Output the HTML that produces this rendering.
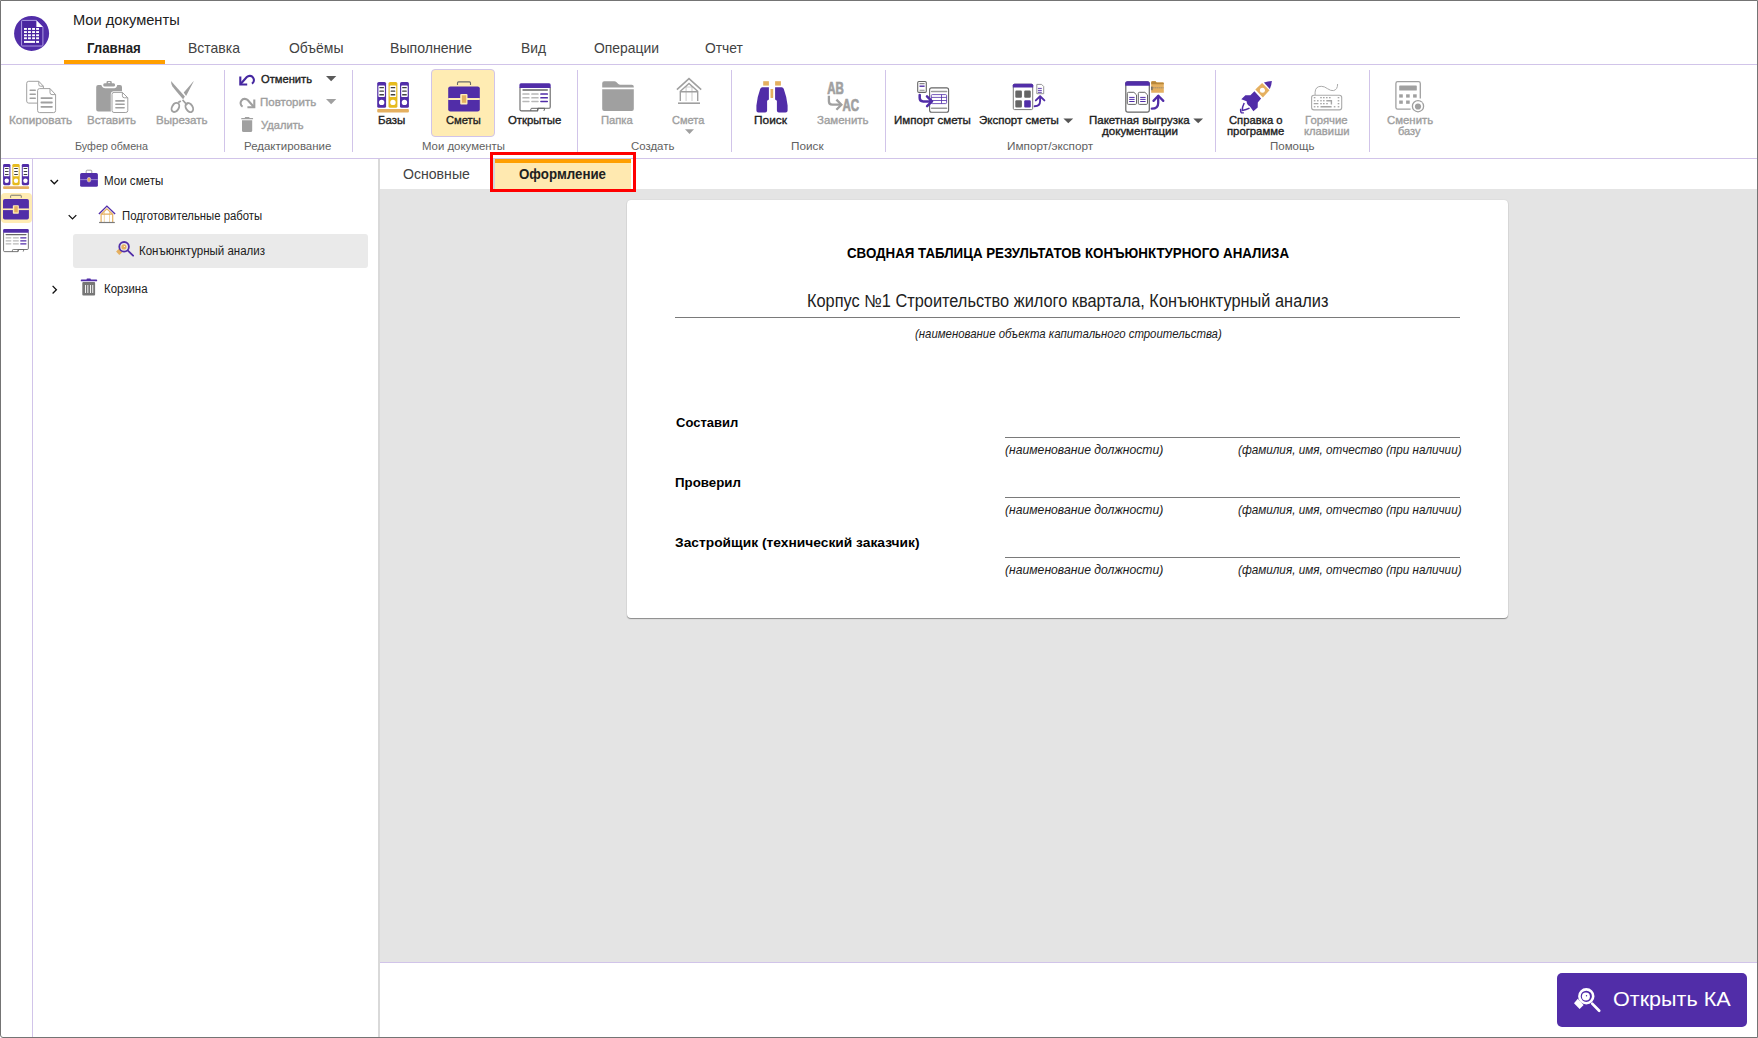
<!DOCTYPE html>
<html><head><meta charset="utf-8"><style>
html,body{margin:0;padding:0;width:1758px;height:1038px;overflow:hidden;background:#fff}
body{position:relative;font-family:"Liberation Sans",sans-serif}
.t{position:absolute;white-space:nowrap;transform-origin:0 0}
svg{overflow:visible}
</style></head><body>
<div style="position:absolute;left:1px;top:64px;width:1756px;height:1px;background:#d1c4e9"></div>
<div style="position:absolute;left:64px;top:60px;width:101px;height:4px;background:#ff9f00"></div>
<div style="position:absolute;left:1px;top:158px;width:1756px;height:1px;background:#d1c4e9"></div>
<div style="position:absolute;left:224px;top:70px;width:1px;height:82px;background:#d1c4e9"></div>
<div style="position:absolute;left:352px;top:70px;width:1px;height:82px;background:#d1c4e9"></div>
<div style="position:absolute;left:577px;top:70px;width:1px;height:82px;background:#d1c4e9"></div>
<div style="position:absolute;left:731px;top:70px;width:1px;height:82px;background:#d1c4e9"></div>
<div style="position:absolute;left:885px;top:70px;width:1px;height:82px;background:#d1c4e9"></div>
<div style="position:absolute;left:1215px;top:70px;width:1px;height:82px;background:#d1c4e9"></div>
<div style="position:absolute;left:1369px;top:70px;width:1px;height:82px;background:#d1c4e9"></div>
<div style="position:absolute;left:431px;top:69px;width:64px;height:68px;background:#ffecb3;border:1px solid #d1c4e9;box-sizing:border-box;border-radius:4px"></div>
<div style="position:absolute;left:32px;top:159px;width:1px;height:878px;background:#d1c4e9"></div>
<div style="position:absolute;left:1px;top:193px;width:31px;height:30px;background:#ffecb3;border-radius:4px"></div>
<div style="position:absolute;left:378px;top:159px;width:2px;height:878px;background:#d9d9d9"></div>
<div style="position:absolute;left:73px;top:234px;width:295px;height:34px;background:#eaeaea;border-radius:3px"></div>
<div style="position:absolute;left:380px;top:189px;width:1377px;height:773px;background:#e4e4e4"></div>
<div style="position:absolute;left:380px;top:962px;width:1377px;height:1px;background:#d1c4e9"></div>
<div style="position:absolute;left:493px;top:159px;width:2px;height:30px;background:#cfd8dc"></div>
<div style="position:absolute;left:495px;top:159px;width:136px;height:4px;background:#ff9f00"></div>
<div style="position:absolute;left:495px;top:163px;width:136px;height:26px;background:#ffe9b0"></div>
<div style="position:absolute;left:627px;top:200px;width:881px;height:418px;background:#fff;border-radius:4px;box-shadow:0 1px 1px rgba(0,0,0,0.38),0 0 1.5px rgba(0,0,0,0.12)"></div>
<div style="position:absolute;left:675px;top:317px;width:785px;height:1px;background:#7a7a7a"></div>
<div style="position:absolute;left:1005px;top:437px;width:455px;height:1px;background:#7a7a7a"></div>
<div style="position:absolute;left:1005px;top:497px;width:455px;height:1px;background:#7a7a7a"></div>
<div style="position:absolute;left:1005px;top:557px;width:455px;height:1px;background:#7a7a7a"></div>
<div style="position:absolute;left:1557px;top:973px;width:190px;height:54px;background:#512da8;border-radius:5px"></div>
<div style="position:absolute;left:490px;top:152px;width:146px;height:40px;border:3px solid #ff0000;box-sizing:border-box"></div>
<div style="position:absolute;left:0px;top:0px;width:1758px;height:1038px;border:1px solid #747474;box-sizing:border-box;border-bottom-left-radius:3px"></div>
<svg style="position:absolute;left:0px;top:0px" width="1758" height="1038" viewBox="0 0 1758 1038"><circle cx="31.6" cy="33.4" r="17.5" fill="#512da8"/><path d="M21.6 21.2 Q21.6 20.4 22.4 20.4 H36.4 L42.9 26.9 V45.2 Q42.9 46 42.1 46 H22.4 Q21.6 46 21.6 45.2 Z" fill="#4a25a0" stroke="#b9a8ea" stroke-width="0.9"/><path d="M36.4 20.6 V26.9 H42.7 Z" fill="#fff"/><rect x="24.0" y="28.0" width="2.9" height="1.9" fill="#fff"/><rect x="28.0" y="28.0" width="2.9" height="1.9" fill="#fff"/><rect x="32.1" y="28.0" width="2.9" height="1.9" fill="#fff"/><rect x="36.1" y="28.0" width="2.9" height="1.9" fill="#fff"/><rect x="24.0" y="31.1" width="2.9" height="1.9" fill="#fff"/><rect x="28.0" y="31.1" width="2.9" height="1.9" fill="#fff"/><rect x="32.1" y="31.1" width="2.9" height="1.9" fill="#fff"/><rect x="36.1" y="31.1" width="2.9" height="1.9" fill="#fff"/><rect x="24.0" y="34.3" width="2.9" height="1.9" fill="#fff"/><rect x="28.0" y="34.3" width="2.9" height="1.9" fill="#fff"/><rect x="32.1" y="34.3" width="2.9" height="1.9" fill="#fff"/><rect x="36.1" y="34.3" width="2.9" height="1.9" fill="#fff"/><rect x="24.0" y="37.3" width="2.9" height="1.9" fill="#fff"/><rect x="28.0" y="37.3" width="2.9" height="1.9" fill="#fff"/><rect x="32.1" y="37.3" width="2.9" height="1.9" fill="#fff"/><rect x="36.1" y="37.3" width="2.9" height="1.9" fill="#fff"/><rect x="24.0" y="40.9" width="11" height="2.0" fill="#fff"/><rect x="36.1" y="40.9" width="2.9" height="2.0" fill="#fff"/><path d="M37.6 103.1 H28.7 Q26.7 103.1 26.7 101.1 V83.3 Q26.7 81.3 28.7 81.3 H38.8 L43.4 86.2 V88.3" fill="none" stroke="#a0a0a0" stroke-width="1"/><path d="M38.8 81.3 V84.4 Q38.8 86.2 40.6 86.2 H43.4" fill="none" stroke="#a0a0a0" stroke-width="1"/><rect x="29.4" y="89.5" width="6.6" height="1.6" rx="0.8" fill="#a0a0a0"/><rect x="29.4" y="93.5" width="6.6" height="1.6" rx="0.8" fill="#a0a0a0"/><rect x="29.4" y="97.4" width="6.6" height="1.6" rx="0.8" fill="#a0a0a0"/><path d="M39.6 88.6 H50 L55.6 94.6 V110.6 Q55.6 112.6 53.6 112.6 H39.6 Q37.6 112.6 37.6 110.6 V90.6 Q37.6 88.6 39.6 88.6 Z" fill="#fff" stroke="#a0a0a0" stroke-width="1"/><path d="M50 88.6 V92.6 Q50 94.6 52 94.6 H55.6" fill="none" stroke="#a0a0a0" stroke-width="1"/><rect x="40.5" y="97.2" width="12.3" height="1.8" rx="0.9" fill="#a0a0a0"/><rect x="40.5" y="101.6" width="12.3" height="1.8" rx="0.9" fill="#a0a0a0"/><rect x="40.5" y="105.9" width="12.3" height="1.8" rx="0.9" fill="#a0a0a0"/><path d="M98.2 85.1 H101.3 Q102.6 88.3 105.2 88.3 H114.3 Q116.4 88.3 117.3 85.1 H120 Q122 85.1 122 87.1 V109.6 Q122 111.6 120 111.6 H98.2 Q96.2 111.6 96.2 109.6 V87.1 Q96.2 85.1 98.2 85.1 Z" fill="#a0a0a0"/><path d="M104.6 83.3 H106.5 V82.3 Q106.5 81.1 107.7 81.1 H110.6 Q111.8 81.1 111.8 82.3 V83.3 H113.7 Q115.1 83.3 115.1 84.9 Q115.1 86.6 113.5 86.6 H104.8 Q103.2 86.6 103.2 84.9 Q103.2 83.3 104.6 83.3 Z" fill="#a0a0a0"/><rect x="108.1" y="82.1" width="2.1" height="1" fill="#fff"/><path d="M114 92.4 H122.4 L127.8 97.8 V110.5 Q127.8 112.5 125.8 112.5 H114 Q112 112.5 112 110.5 V94.4 Q112 92.4 114 92.4 Z" fill="#fff" stroke="#fff" stroke-width="2.4"/><path d="M114 92.4 H122.4 L127.8 97.8 V110.5 Q127.8 112.5 125.8 112.5 H114 Q112 112.5 112 110.5 V94.4 Q112 92.4 114 92.4 Z" fill="#fff" stroke="#a0a0a0" stroke-width="1"/><path d="M122.4 92.4 V95.8 Q122.4 97.8 124.4 97.8 H127.8" fill="none" stroke="#a0a0a0" stroke-width="1"/><rect x="115.1" y="100.1" width="9.8" height="1.6" rx="0.8" fill="#a0a0a0"/><rect x="115.1" y="103.5" width="9.8" height="1.6" rx="0.8" fill="#a0a0a0"/><rect x="115.1" y="107.0" width="9.8" height="1.6" rx="0.8" fill="#a0a0a0"/><path d="M171 81 L184.9 96.6 L183.1 99.3 Q175.5 90.5 172.5 86.5 Q171 84 171 81 Z" fill="#a0a0a0"/><path d="M183.1 99.3 L187.8 104.6 L186.6 105.8 L182 100.6 Z" fill="#a0a0a0"/><path d="M193.9 81 L186.1 95.9 L183.7 92.6 Q189 86.5 191.5 83.5 Q193 81.8 193.9 81 Z" fill="#a0a0a0"/><ellipse cx="175.4" cy="107.4" rx="3.3" ry="4.9" transform="rotate(32 175.4 107.4)" fill="none" stroke="#a0a0a0" stroke-width="1.9"/><ellipse cx="189.3" cy="107.6" rx="3.3" ry="4.9" transform="rotate(-32 189.3 107.6)" fill="none" stroke="#a0a0a0" stroke-width="1.9"/><path d="M178.2 102.6 L180.8 100.9" stroke="#a0a0a0" stroke-width="1.8"/><path d="M240.3 76.6 V84.5 H247.2" fill="none" stroke="#4527a0" stroke-width="2.1"/><path d="M240.6 84 L246.8 77.1 A4.2 4.2 0 1 1 251.9 83.7" fill="none" stroke="#4527a0" stroke-width="2.1"/><path d="M254.3 99.6 V107.3 H247.4" fill="none" stroke="#a0a0a0" stroke-width="2.1"/><path d="M253.9 107 L247.7 100.1 A4.2 4.2 0 1 0 242.6 106.7" fill="none" stroke="#a0a0a0" stroke-width="2.1"/><rect x="241.2" y="117.9" width="11.9" height="1.4" rx="0.5" fill="#a0a0a0"/><rect x="244.8" y="117" width="4.7" height="1.4" rx="0.6" fill="#a0a0a0"/><path d="M242 120.2 H252.2 V130.5 Q252.2 132 250.7 132 H243.5 Q242 132 242 130.5 Z" fill="#a0a0a0"/><path d="M326 76 H336.3 L331.15 81.2 Z" fill="#5a5a5a"/><path d="M326 99 H336.3 L331.15 104.2 Z" fill="#a0a0a0"/><rect x="377.2" y="82" width="8.9" height="25.8" rx="1.6" fill="#512da8"/><rect x="378.4" y="85.6" width="6.5" height="11.4" rx="0.8" fill="#fff"/><rect x="379.3" y="86.9" width="4.7" height="1.3" rx="0.5" fill="#424242"/><rect x="379.3" y="90.4" width="4.7" height="1.3" rx="0.5" fill="#424242"/><rect x="379.3" y="94.10000000000001" width="4.7" height="1.3" rx="0.5" fill="#424242"/><circle cx="381.65" cy="102.4" r="2.7" fill="#fff"/><rect x="388.5" y="82" width="8.9" height="25.8" rx="1.6" fill="#e6bb1e"/><rect x="389.7" y="85.6" width="6.5" height="11.4" rx="0.8" fill="#fff"/><rect x="390.6" y="86.9" width="4.7" height="1.3" rx="0.5" fill="#424242"/><rect x="390.6" y="90.4" width="4.7" height="1.3" rx="0.5" fill="#424242"/><rect x="390.6" y="94.10000000000001" width="4.7" height="1.3" rx="0.5" fill="#424242"/><circle cx="392.95" cy="102.4" r="2.7" fill="#fff"/><rect x="400.0" y="82" width="8.9" height="25.8" rx="1.6" fill="#512da8"/><rect x="401.2" y="85.6" width="6.5" height="11.4" rx="0.8" fill="#fff"/><rect x="402.1" y="86.9" width="4.7" height="1.3" rx="0.5" fill="#424242"/><rect x="402.1" y="90.4" width="4.7" height="1.3" rx="0.5" fill="#424242"/><rect x="402.1" y="94.10000000000001" width="4.7" height="1.3" rx="0.5" fill="#424242"/><circle cx="404.45" cy="102.4" r="2.7" fill="#fff"/><rect x="377.2" y="109.1" width="31.7" height="3.5" rx="1" fill="#e5b060"/><path d="M457.5 85 V82.9 Q457.5 81.9 458.5 81.9 H469.5 Q470.5 81.9 470.5 82.9 V85" fill="none" stroke="#6a6a6a" stroke-width="1.1"/><rect x="448.2" y="86.4" width="31.6" height="25.1" rx="2.2" fill="#512da8"/><rect x="448.2" y="98.0" width="31.6" height="2.0" fill="#ffecb3"/><rect x="460.2" y="94.0" width="7.3" height="10.5" rx="1" fill="#ffecb3"/><rect x="461.9" y="95.3" width="4.3" height="7.5" fill="#e5b060"/><path d="M520 87.5 V109.8 Q520 110.9 521.4 110.9 H537.5 L538.3 108.3 H548.9 Q550.2 108.3 550.2 106.9 V87.5" fill="#fff" stroke="#666666" stroke-width="1.1"/><path d="M530.8 110.9 V109.2 Q530.8 108.3 531.8 108.3 H544.8 L543.9 110.9 M537.6 108.3 V110.9" fill="none" stroke="#666666" stroke-width="1.0"/><path d="M519.4 88 V84.9 Q519.4 83.3 521 83.3 H549.1 Q550.7 83.3 550.7 84.9 V88 Z" fill="#512da8"/><rect x="522.3" y="89.3" width="25.7" height="1.5" rx="0.7" fill="#666666"/><rect x="522.3" y="93.35" width="7.3" height="1.5" rx="0.6" fill="#b8b8b8"/><rect x="531.2" y="93.35" width="7.5" height="1.5" rx="0.6" fill="#b8b8b8"/><rect x="540.2" y="93.35" width="7.8" height="1.5" rx="0.6" fill="#512da8"/><rect x="522.3" y="97.05" width="7.3" height="1.5" rx="0.6" fill="#b8b8b8"/><rect x="531.2" y="97.05" width="7.5" height="1.5" rx="0.6" fill="#b8b8b8"/><rect x="540.2" y="97.05" width="7.8" height="1.5" rx="0.6" fill="#512da8"/><rect x="522.3" y="100.65" width="7.3" height="1.5" rx="0.6" fill="#b8b8b8"/><rect x="531.2" y="100.65" width="7.5" height="1.5" rx="0.6" fill="#b8b8b8"/><rect x="540.2" y="100.65" width="7.8" height="1.5" rx="0.6" fill="#512da8"/><path d="M602.2 87.6 V83.3 Q602.2 81.3 604.2 81.3 H614.3 Q615.6 81.3 616.6 82.3 L618.3 84 Q619.1 84.8 620.3 84.8 H631.8 Q633.8 84.8 633.8 86.8 V87.6 Z" fill="#a0a0a0"/><path d="M602.2 89.2 H633.8 V109 Q633.8 111 631.8 111 H604.2 Q602.2 111 602.2 109 Z" fill="#a0a0a0"/><path d="M676.9 89.7 L689 78.7 L701.2 89.7" fill="none" stroke="#a0a0a0" stroke-width="1.6"/><path d="M684.6 87 H693.4 M686.1 86 V100.9 M692 86 V100.9" fill="none" stroke="#cfcfcf" stroke-width="1.1"/><path d="M680.3 100.9 V91.2 L689 83.4 L697.7 91.2 V100.9 M680.3 91.8 H697.7" fill="none" stroke="#a0a0a0" stroke-width="1.4"/><path d="M678 103.2 H700" fill="none" stroke="#a0a0a0" stroke-width="1.6"/><path d="M685 129.3 H694 L689.5 133.9 Z" fill="#a0a0a0"/><rect x="763.2" y="81.2" width="5.7" height="4.4" fill="#e5b060"/><rect x="775.1" y="81.2" width="5.8" height="4.4" fill="#e5b060"/><rect x="770.5" y="89.1" width="2.7" height="8.9" rx="0.4" fill="#e5b060"/><path d="M762.3 87.2 H768.9 V99.5 L767.1 100.8 V110.5 Q767.1 112.5 765.1 112.5 H758.4 Q756.4 112.5 756.4 110.5 V105.5 Q757.5 96 760.2 89 Q760.8 87.2 762.3 87.2 Z" fill="#512da8"/><path d="M781.7 87.2 H775.1 V99.5 L776.9 100.8 V110.5 Q776.9 112.5 778.9 112.5 H785.6 Q787.6 112.5 787.6 110.5 V105.5 Q786.5 96 783.8 89 Q783.2 87.2 781.7 87.2 Z" fill="#512da8"/><text x="827.3" y="93.7" font-family="Liberation Sans" font-weight="bold" font-size="16" fill="#a0a0a0" stroke="#a0a0a0" stroke-width="0.7" transform="translate(827 0) scale(0.72 1) translate(-827 0)">AB</text><path d="M828.9 95.8 V101.3 Q828.9 104.7 832.3 104.7 H840.5" fill="none" stroke="#a0a0a0" stroke-width="2.3"/><path d="M836.4 99.6 L841.4 104.7 L836.4 109.8" fill="none" stroke="#a0a0a0" stroke-width="2.3"/><text x="842.5" y="110.7" font-family="Liberation Sans" font-weight="bold" font-size="16" fill="#a0a0a0" stroke="#a0a0a0" stroke-width="0.7" transform="translate(842.2 0) scale(0.72 1) translate(-842.2 0)">AC</text><rect x="917.7" y="81.5" width="8.6" height="10.9" rx="1.2" fill="#fff" stroke="#666666" stroke-width="1.1"/><path d="M919.5 83.6 H924.6 M919.5 90.3 H924.6" stroke="#8a8a8a" stroke-width="1.1"/><path d="M919.5 86.2 H924.6" stroke="#512da8" stroke-width="1.4"/><rect x="929.6" y="87.9" width="19" height="24.3" rx="2" fill="#fff" stroke="#666666" stroke-width="1.1"/><path d="M931.6 91.6 H946.6 M931.6 108.3 H946.6" stroke="#9a9a9a" stroke-width="1.5" stroke-linecap="round"/><rect x="931.3" y="94.6" width="15.3" height="9" rx="1" fill="none" stroke="#512da8" stroke-width="0.8"/><path d="M931.3 97.4 H946.6 M931.3 100.5 H946.6 M941.5 94.6 V103.6" stroke="#512da8" stroke-width="0.8"/><path d="M919.7 95 V98 Q919.7 101.4 923.2 101.4 H931" fill="none" stroke="#512da8" stroke-width="2.5" stroke-linecap="round"/><path d="M927 96.4 L932 101.4 L927.1 106.2" fill="none" stroke="#512da8" stroke-width="2.5" stroke-linecap="round" stroke-linejoin="round"/><rect x="1013.3" y="84.2" width="19.4" height="25.4" rx="1.3" fill="#fff" stroke="#7a7a7a" stroke-width="1"/><path d="M1012.8 87.6 V85.3 Q1012.8 83.7 1014.4 83.7 H1031.6 Q1033.2 83.7 1033.2 85.3 V87.6 Z" fill="#512da8"/><rect x="1015.3" y="90.6" width="6.6" height="7.2" rx="1.1" fill="#666666"/><rect x="1024.2" y="90.6" width="6.6" height="7.2" rx="1.1" fill="#666666"/><rect x="1015.3" y="100.3" width="6.6" height="7.2" rx="1.1" fill="#666666"/><rect x="1024.2" y="100.3" width="6.6" height="7.2" rx="1.1" fill="#512da8"/><path d="M1036.8 84.4 H1041.6 L1043.7 86.5 V93.7 H1036.8 Z" fill="#fff" stroke="#8a8a8a" stroke-width="0.9"/><path d="M1037.9 88.4 H1041.8 M1037.9 90.4 H1041.8 M1037.9 92.3 H1041.8" stroke="#512da8" stroke-width="0.9"/><path d="M1034.6 106.3 Q1040.1 106.3 1040.1 101 V96.8" fill="none" stroke="#512da8" stroke-width="1.9" stroke-linecap="round"/><path d="M1035.8 100.4 L1040.1 96.3 L1044.4 100.4" fill="none" stroke="#512da8" stroke-width="1.9" stroke-linecap="round" stroke-linejoin="round"/><path d="M1063.4 118.6 H1073.2 L1068.3 123.3 Z" fill="#555"/><rect x="1125.8" y="81.8" width="23.5" height="30.4" rx="2.2" fill="#fff" stroke="#666666" stroke-width="1.2"/><path d="M1125.2 85.7 V83.3 Q1125.2 81.2 1127.3 81.2 H1147.6 Q1149.8 81.2 1149.8 83.3 V85.7 Z" fill="#512da8"/><path d="M1128.5 92.3 H1133.8999999999999 L1136.5 94.9 V103.3 Q1136.5 104.4 1135.3 104.4 H1128.5 Q1127.3 104.4 1127.3 103.3 V93.5 Q1127.3 92.3 1128.5 92.3 Z" fill="#fff" stroke="#666666" stroke-width="1"/><path d="M1129.2 97.4 H1134.6 M1129.2 99.4 H1134.6 M1129.2 101.5 H1134.6" stroke="#512da8" stroke-width="1"/><path d="M1139.5 92.3 H1144.8999999999999 L1147.5 94.9 V103.3 Q1147.5 104.4 1146.3 104.4 H1139.5 Q1138.3 104.4 1138.3 103.3 V93.5 Q1138.3 92.3 1139.5 92.3 Z" fill="#fff" stroke="#666666" stroke-width="1"/><path d="M1140.2 97.4 H1145.6 M1140.2 99.4 H1145.6 M1140.2 101.5 H1145.6" stroke="#512da8" stroke-width="1"/><path d="M1151.2 92.8 V82.2 Q1151.2 81.2 1152.2 81.2 H1155.5 L1156.6 82.4 H1163 Q1163.8 82.4 1163.8 83.2 V92.8 Z" fill="#e5b060"/><path d="M1151.2 83.9 V82.2 Q1151.2 81.2 1152.2 81.2 H1155.5 L1156.6 82.4 H1163 Q1163.8 82.4 1163.8 83.2 V84.3 H1151.2 Z" fill="#b8873a"/><path d="M1151.4 87.8 H1163.8" stroke="#7a7a7a" stroke-width="1" stroke-dasharray="1 1"/><rect x="1151.2" y="86.6" width="1.4" height="3.6" fill="#666"/><path d="M1151.8 108.7 Q1158.2 108.7 1158.2 103 V96.2" fill="none" stroke="#512da8" stroke-width="2.3" stroke-linecap="round"/><path d="M1153.5 100.9 L1158.3 95.7 L1163.3 100.9" fill="none" stroke="#512da8" stroke-width="2.3" stroke-linecap="round" stroke-linejoin="round"/><path d="M1193.3 118.6 H1203.1 L1198.2 123.3 Z" fill="#555"/><path d="M1263.9 82.6 Q1268 81.1 1271.8 81 Q1271.7 85 1269.8 89 Z" fill="#512da8"/><path d="M1255.3 89.6 L1262.1 83.1 L1269.5 90.3 L1262.9 97.5 Z" fill="#e5b060"/><circle cx="1262.4" cy="90.3" r="2.5" fill="#fff"/><path d="M1254.4 91.3 L1261.1 98.6 L1257.8 102.4 L1257.7 107.6 L1253.4 111.2 L1249.8 106.2 Q1247 105.5 1246.6 101.3 L1241.3 99.2 L1245.4 95.3 L1250.4 95.3 Z" fill="#512da8"/><path d="M1244.2 103 Q1242.3 106.8 1242.2 110.4 Q1246.4 109.9 1249.5 108.2" fill="none" stroke="#512da8" stroke-width="1.5"/><path d="M1240.6 108.7 Q1240.3 112.3 1241.6 112.8 Q1242.9 113.1 1243.8 112.6" fill="none" stroke="#512da8" stroke-width="1.3"/><rect x="1311.6" y="95.2" width="30.1" height="14.7" rx="2.3" fill="#fff" stroke="#aaaaaa" stroke-width="1.1"/><path d="M1315.1 95 V92.2 Q1315.4 86.3 1321.3 86.3 Q1324.3 86.3 1327.4 88.6 Q1330.8 91 1333.4 90.6 Q1337.6 89.8 1337.6 84" fill="none" stroke="#aaaaaa" stroke-width="1"/><rect x="1313.8" y="97.0" width="1.6" height="1.3" fill="#a6a6a6"/><rect x="1320.2" y="97.0" width="1.6" height="1.3" fill="#a6a6a6"/><rect x="1323.0" y="97.0" width="1.6" height="1.3" fill="#a6a6a6"/><rect x="1326.0" y="97.0" width="1.6" height="1.3" fill="#a6a6a6"/><rect x="1329.0" y="97.0" width="1.6" height="1.3" fill="#a6a6a6"/><rect x="1337.7" y="97.0" width="1.6" height="1.3" fill="#a6a6a6"/><rect x="1313.8" y="100.1" width="1.6" height="1.3" fill="#a6a6a6"/><rect x="1317.0" y="100.1" width="1.6" height="1.3" fill="#a6a6a6"/><rect x="1320.2" y="100.1" width="1.6" height="1.3" fill="#a6a6a6"/><rect x="1323.0" y="100.1" width="1.6" height="1.3" fill="#a6a6a6"/><rect x="1337.7" y="100.1" width="1.6" height="1.3" fill="#a6a6a6"/><rect x="1320.2" y="103.0" width="1.6" height="1.3" fill="#a6a6a6"/><rect x="1323.0" y="103.0" width="1.6" height="1.3" fill="#a6a6a6"/><rect x="1337.7" y="103.0" width="1.6" height="1.3" fill="#a6a6a6"/><rect x="1313.8" y="106.1" width="1.6" height="1.3" fill="#a6a6a6"/><rect x="1317.0" y="106.1" width="1.6" height="1.3" fill="#a6a6a6"/><rect x="1333.8" y="106.1" width="1.6" height="1.3" fill="#a6a6a6"/><rect x="1337.7" y="106.1" width="1.6" height="1.3" fill="#a6a6a6"/><rect x="1313.6" y="103.0" width="4.9" height="1.3" rx="0.6" fill="#a6a6a6"/><rect x="1320.4" y="106.1" width="11.3" height="1.4" rx="0.6" fill="#a6a6a6"/><path d="M1326.3 100.7 H1331.4 V104.4" fill="none" stroke="#a6a6a6" stroke-width="1.4"/><rect x="1326.2" y="103" width="1.6" height="1.3" fill="#a6a6a6"/><path d="M1420.3 98.6 V83.4 Q1420.3 81.6 1418.5 81.6 H1397.7 Q1395.9 81.6 1395.9 83.4 V107.4 Q1395.9 109.2 1397.7 109.2 H1410.6" fill="none" stroke="#a0a0a0" stroke-width="1.3"/><rect x="1399.2" y="85.4" width="17.6" height="5.2" rx="0.7" fill="#a0a0a0"/><rect x="1399.2" y="94.3" width="3.6" height="3.3" fill="#a0a0a0"/><rect x="1406.1" y="94.3" width="3.6" height="3.3" fill="#a0a0a0"/><rect x="1413.1" y="94.3" width="3.6" height="3.3" fill="#a0a0a0"/><rect x="1399.2" y="100.5" width="3.6" height="3.3" fill="#a0a0a0"/><rect x="1406.1" y="100.5" width="3.6" height="3.3" fill="#a0a0a0"/><circle cx="1418" cy="106.2" r="5.6" fill="#fff" stroke="#a0a0a0" stroke-width="1.3"/><circle cx="1418" cy="106.5" r="3.1" fill="#a0a0a0"/><path d="M1419.2 102.6 L1422.6 102.4 L1421.4 105.2 Z" fill="#fff"/><g transform="translate(3.1 164) scale(0.82) translate(-377.2 -82)"><rect x="377.2" y="82" width="8.9" height="25.8" rx="1.6" fill="#512da8"/><rect x="378.4" y="85.6" width="6.5" height="11.4" rx="0.8" fill="#fff"/><rect x="379.3" y="86.9" width="4.7" height="1.3" rx="0.5" fill="#424242"/><rect x="379.3" y="90.4" width="4.7" height="1.3" rx="0.5" fill="#424242"/><rect x="379.3" y="94.10000000000001" width="4.7" height="1.3" rx="0.5" fill="#424242"/><circle cx="381.65" cy="102.4" r="2.7" fill="#fff"/><rect x="388.5" y="82" width="8.9" height="25.8" rx="1.6" fill="#e6bb1e"/><rect x="389.7" y="85.6" width="6.5" height="11.4" rx="0.8" fill="#fff"/><rect x="390.6" y="86.9" width="4.7" height="1.3" rx="0.5" fill="#424242"/><rect x="390.6" y="90.4" width="4.7" height="1.3" rx="0.5" fill="#424242"/><rect x="390.6" y="94.10000000000001" width="4.7" height="1.3" rx="0.5" fill="#424242"/><circle cx="392.95" cy="102.4" r="2.7" fill="#fff"/><rect x="400.0" y="82" width="8.9" height="25.8" rx="1.6" fill="#512da8"/><rect x="401.2" y="85.6" width="6.5" height="11.4" rx="0.8" fill="#fff"/><rect x="402.1" y="86.9" width="4.7" height="1.3" rx="0.5" fill="#424242"/><rect x="402.1" y="90.4" width="4.7" height="1.3" rx="0.5" fill="#424242"/><rect x="402.1" y="94.10000000000001" width="4.7" height="1.3" rx="0.5" fill="#424242"/><circle cx="404.45" cy="102.4" r="2.7" fill="#fff"/><rect x="377.2" y="109.1" width="31.7" height="3.5" rx="1" fill="#e5b060"/></g><g transform="translate(3 195) scale(0.82) translate(-448.2 -81.6)"><path d="M457.5 85 V82.9 Q457.5 81.9 458.5 81.9 H469.5 Q470.5 81.9 470.5 82.9 V85" fill="none" stroke="#6a6a6a" stroke-width="1.1"/><rect x="448.2" y="86.4" width="31.6" height="25.1" rx="2.2" fill="#512da8"/><rect x="448.2" y="98.0" width="31.6" height="2.0" fill="#ffecb3"/><rect x="460.2" y="94.0" width="7.3" height="10.5" rx="1" fill="#ffecb3"/><rect x="461.9" y="95.3" width="4.3" height="7.5" fill="#e5b060"/></g><g transform="translate(3.1 229) scale(0.82) translate(-519.4 -83.3)"><path d="M520 87.5 V109.8 Q520 110.9 521.4 110.9 H537.5 L538.3 108.3 H548.9 Q550.2 108.3 550.2 106.9 V87.5" fill="#fff" stroke="#666666" stroke-width="1.1"/><path d="M530.8 110.9 V109.2 Q530.8 108.3 531.8 108.3 H544.8 L543.9 110.9 M537.6 108.3 V110.9" fill="none" stroke="#666666" stroke-width="1.0"/><path d="M519.4 88 V84.9 Q519.4 83.3 521 83.3 H549.1 Q550.7 83.3 550.7 84.9 V88 Z" fill="#512da8"/><rect x="522.3" y="89.3" width="25.7" height="1.5" rx="0.7" fill="#666666"/><rect x="522.3" y="93.35" width="7.3" height="1.5" rx="0.6" fill="#b8b8b8"/><rect x="531.2" y="93.35" width="7.5" height="1.5" rx="0.6" fill="#b8b8b8"/><rect x="540.2" y="93.35" width="7.8" height="1.5" rx="0.6" fill="#512da8"/><rect x="522.3" y="97.05" width="7.3" height="1.5" rx="0.6" fill="#b8b8b8"/><rect x="531.2" y="97.05" width="7.5" height="1.5" rx="0.6" fill="#b8b8b8"/><rect x="540.2" y="97.05" width="7.8" height="1.5" rx="0.6" fill="#512da8"/><rect x="522.3" y="100.65" width="7.3" height="1.5" rx="0.6" fill="#b8b8b8"/><rect x="531.2" y="100.65" width="7.5" height="1.5" rx="0.6" fill="#b8b8b8"/><rect x="540.2" y="100.65" width="7.8" height="1.5" rx="0.6" fill="#512da8"/></g><path d="M50.6 180 L54.3 183.8 L58 180" fill="none" stroke="#111" stroke-width="1.3"/><path d="M68.7 215.1 L72.5 218.9 L76.3 215.1" fill="none" stroke="#111" stroke-width="1.3"/><path d="M52.6 285.9 L56.4 289.7 L52.6 293.5" fill="none" stroke="#111" stroke-width="1.3"/><path d="M86.2 173 V171.1 Q86.2 170.2 87.1 170.2 H90.9 Q91.8 170.2 91.8 171.1 V173" fill="none" stroke="#9a9a9a" stroke-width="0.9"/><rect x="80.1" y="173" width="17.8" height="13.8" rx="1.6" fill="#512da8"/><rect x="80.1" y="179.3" width="17.8" height="0.8" fill="#a996dc"/><ellipse cx="89" cy="179.7" rx="1.8" ry="2.4" fill="#e5b060" stroke="#cfc3ee" stroke-width="0.6"/><path d="M104.3 211.5 V222 M109.5 211.5 V222" stroke="#f2d7a8" stroke-width="1"/><path d="M101.1 222 V214.2 L106.9 208.8 L112.7 214.2 V222 M101.1 214.2 H112.7" fill="none" stroke="#e5b060" stroke-width="1.2"/><path d="M98.9 213.9 L106.9 206.1 L115.1 213.9" fill="none" stroke="#512da8" stroke-width="1.4"/><path d="M99.1 222.5 H114.8" stroke="#7a7a7a" stroke-width="1.2"/><path d="M116.1 251.6 L119.2 248.6 L122.2 252.2 L119.3 255.1 Z" fill="#e5b060"/><circle cx="123.9" cy="246.9" r="2.6" fill="#e5b060"/><circle cx="124.4" cy="246.5" r="0.6" fill="#fff"/><circle cx="124.1" cy="246.8" r="4.8" fill="none" stroke="#512da8" stroke-width="1.8"/><path d="M127.9 250.6 L133.1 255.7" stroke="#512da8" stroke-width="1.8" stroke-linecap="round"/><path d="M81.6 280.4 H96.3" stroke="#512da8" stroke-width="1.8" stroke-linecap="round"/><rect x="86.6" y="278.5" width="4.2" height="1.9" rx="0.6" fill="#512da8"/><rect x="82.3" y="282.1" width="12.8" height="13.5" rx="1" fill="#767676"/><rect x="85.0" y="285" width="0.9" height="8" fill="#fff"/><rect x="87.4" y="285" width="0.9" height="8" fill="#fff"/><rect x="90.0" y="285" width="0.9" height="8" fill="#fff"/><rect x="92.3" y="285" width="0.9" height="8" fill="#fff"/><circle cx="1586.3" cy="996.3" r="6.9" fill="none" stroke="#fff" stroke-width="2.6"/><circle cx="1585.9" cy="996.6" r="4.0" fill="#fff"/><circle cx="1586.5" cy="995.7" r="0.7" fill="#512da8"/><path d="M1592.2 1003.6 L1599.2 1010.8" stroke="#fff" stroke-width="2.7" stroke-linecap="round"/><path d="M1574 1003.3 L1579.6 1009.1 L1583.6 1005 L1577.8 998.8 Z" fill="#fff"/></svg>
<div class="t" style="left:73.49px;top:13.48px;font-size:14.5px;line-height:14.5px;font-weight:normal;font-style:normal;color:#212121;transform:scaleX(1.0096)">Мои документы</div>
<div class="t" style="left:87.29px;top:41.17px;font-size:14.5px;line-height:14.5px;font-weight:bold;font-style:normal;color:#212121;transform:scaleX(0.9123)">Главная</div>
<div class="t" style="left:188.44px;top:41.17px;font-size:14.5px;line-height:14.5px;font-weight:normal;font-style:normal;color:#424242;transform:scaleX(0.9642)">Вставка</div>
<div class="t" style="left:288.54px;top:41.17px;font-size:14.5px;line-height:14.5px;font-weight:normal;font-style:normal;color:#424242;transform:scaleX(0.9618)">Объёмы</div>
<div class="t" style="left:390.23px;top:41.17px;font-size:14.5px;line-height:14.5px;font-weight:normal;font-style:normal;color:#424242;transform:scaleX(0.9723)">Выполнение</div>
<div class="t" style="left:520.65px;top:41.17px;font-size:14.5px;line-height:14.5px;font-weight:normal;font-style:normal;color:#424242;transform:scaleX(0.9520)">Вид</div>
<div class="t" style="left:594.04px;top:41.17px;font-size:14.5px;line-height:14.5px;font-weight:normal;font-style:normal;color:#424242;transform:scaleX(0.9576)">Операции</div>
<div class="t" style="left:705.45px;top:41.17px;font-size:14.5px;line-height:14.5px;font-weight:normal;font-style:normal;color:#424242;transform:scaleX(0.9538)">Отчет</div>
<div class="t" style="left:8.76px;top:114.94px;font-size:11.25px;line-height:11.25px;font-weight:normal;font-style:normal;color:#9e9e9e;-webkit-text-stroke:0.35px #9e9e9e;transform:scaleX(1.0424)">Копировать</div>
<div class="t" style="left:86.87px;top:114.94px;font-size:11.25px;line-height:11.25px;font-weight:normal;font-style:normal;color:#9e9e9e;-webkit-text-stroke:0.35px #9e9e9e;transform:scaleX(1.0283)">Вставить</div>
<div class="t" style="left:156.37px;top:114.94px;font-size:11.25px;line-height:11.25px;font-weight:normal;font-style:normal;color:#9e9e9e;-webkit-text-stroke:0.35px #9e9e9e;transform:scaleX(1.0286)">Вырезать</div>
<div class="t" style="left:261.40px;top:73.94px;font-size:11.25px;line-height:11.25px;font-weight:normal;font-style:normal;color:#212121;-webkit-text-stroke:0.35px #212121;transform:scaleX(0.9922)">Отменить</div>
<div class="t" style="left:260.38px;top:97.34px;font-size:11.25px;line-height:11.25px;font-weight:normal;font-style:normal;color:#9e9e9e;-webkit-text-stroke:0.35px #9e9e9e;transform:scaleX(1.0241)">Повторить</div>
<div class="t" style="left:261.40px;top:119.74px;font-size:11.25px;line-height:11.25px;font-weight:normal;font-style:normal;color:#9e9e9e;-webkit-text-stroke:0.35px #9e9e9e;transform:scaleX(0.9907)">Удалить</div>
<div class="t" style="left:378.38px;top:114.94px;font-size:11.25px;line-height:11.25px;font-weight:normal;font-style:normal;color:#212121;-webkit-text-stroke:0.35px #212121;transform:scaleX(1.0231)">Базы</div>
<div class="t" style="left:446.20px;top:114.94px;font-size:11.25px;line-height:11.25px;font-weight:normal;font-style:normal;color:#212121;-webkit-text-stroke:0.35px #212121;transform:scaleX(0.9943)">Сметы</div>
<div class="t" style="left:507.70px;top:114.94px;font-size:11.25px;line-height:11.25px;font-weight:normal;font-style:normal;color:#212121;-webkit-text-stroke:0.35px #212121;transform:scaleX(1.0113)">Открытые</div>
<div class="t" style="left:601.00px;top:114.94px;font-size:11.25px;line-height:11.25px;font-weight:normal;font-style:normal;color:#9e9e9e;-webkit-text-stroke:0.35px #9e9e9e;transform:scaleX(0.9968)">Папка</div>
<div class="t" style="left:672.30px;top:114.94px;font-size:11.25px;line-height:11.25px;font-weight:normal;font-style:normal;color:#9e9e9e;-webkit-text-stroke:0.35px #9e9e9e;transform:scaleX(0.9788)">Смета</div>
<div class="t" style="left:754.44px;top:114.94px;font-size:11.25px;line-height:11.25px;font-weight:normal;font-style:normal;color:#212121;-webkit-text-stroke:0.35px #212121;transform:scaleX(1.0567)">Поиск</div>
<div class="t" style="left:816.90px;top:114.94px;font-size:11.25px;line-height:11.25px;font-weight:normal;font-style:normal;color:#9e9e9e;-webkit-text-stroke:0.35px #9e9e9e;transform:scaleX(1.0200)">Заменить</div>
<div class="t" style="left:893.97px;top:114.94px;font-size:11.25px;line-height:11.25px;font-weight:normal;font-style:normal;color:#212121;-webkit-text-stroke:0.35px #212121;transform:scaleX(1.0257)">Импорт сметы</div>
<div class="t" style="left:979.18px;top:114.94px;font-size:11.25px;line-height:11.25px;font-weight:normal;font-style:normal;color:#212121;-webkit-text-stroke:0.35px #212121;transform:scaleX(1.0234)">Экспорт сметы</div>
<div class="t" style="left:1088.88px;top:114.94px;font-size:11.25px;line-height:11.25px;font-weight:normal;font-style:normal;color:#212121;-webkit-text-stroke:0.35px #212121;transform:scaleX(1.0214)">Пакетная выгрузка</div>
<div class="t" style="left:1102.40px;top:126.44px;font-size:11.25px;line-height:11.25px;font-weight:normal;font-style:normal;color:#212121;-webkit-text-stroke:0.35px #212121;transform:scaleX(1.0288)">документации</div>
<div class="t" style="left:1229.00px;top:114.94px;font-size:11.25px;line-height:11.25px;font-weight:normal;font-style:normal;color:#212121;-webkit-text-stroke:0.35px #212121;transform:scaleX(1.0000)">Справка о</div>
<div class="t" style="left:1226.70px;top:126.44px;font-size:11.25px;line-height:11.25px;font-weight:normal;font-style:normal;color:#212121;-webkit-text-stroke:0.35px #212121;transform:scaleX(1.0053)">программе</div>
<div class="t" style="left:1304.59px;top:114.94px;font-size:11.25px;line-height:11.25px;font-weight:normal;font-style:normal;color:#9e9e9e;-webkit-text-stroke:0.35px #9e9e9e;transform:scaleX(1.0098)">Горячие</div>
<div class="t" style="left:1304.00px;top:126.44px;font-size:11.25px;line-height:11.25px;font-weight:normal;font-style:normal;color:#9e9e9e;-webkit-text-stroke:0.35px #9e9e9e;transform:scaleX(1.0000)">клавиши</div>
<div class="t" style="left:1386.80px;top:114.94px;font-size:11.25px;line-height:11.25px;font-weight:normal;font-style:normal;color:#9e9e9e;-webkit-text-stroke:0.35px #9e9e9e;transform:scaleX(1.0111)">Сменить</div>
<div class="t" style="left:1398.40px;top:126.44px;font-size:11.25px;line-height:11.25px;font-weight:normal;font-style:normal;color:#9e9e9e;-webkit-text-stroke:0.35px #9e9e9e;transform:scaleX(0.9826)">базу</div>
<div class="t" style="left:74.64px;top:140.74px;font-size:11.25px;line-height:11.25px;font-weight:normal;font-style:normal;color:#616161;transform:scaleX(0.9553)">Буфер обмена</div>
<div class="t" style="left:244.38px;top:140.74px;font-size:11.25px;line-height:11.25px;font-weight:normal;font-style:normal;color:#616161;transform:scaleX(1.0190)">Редактирование</div>
<div class="t" style="left:422.39px;top:140.74px;font-size:11.25px;line-height:11.25px;font-weight:normal;font-style:normal;color:#616161;transform:scaleX(1.0123)">Мои документы</div>
<div class="t" style="left:631.49px;top:140.74px;font-size:11.25px;line-height:11.25px;font-weight:normal;font-style:normal;color:#616161;transform:scaleX(1.0143)">Создать</div>
<div class="t" style="left:791.46px;top:140.74px;font-size:11.25px;line-height:11.25px;font-weight:normal;font-style:normal;color:#616161;transform:scaleX(1.0433)">Поиск</div>
<div class="t" style="left:1006.65px;top:140.74px;font-size:11.25px;line-height:11.25px;font-weight:normal;font-style:normal;color:#616161;transform:scaleX(1.0457)">Импорт/экспорт</div>
<div class="t" style="left:1269.78px;top:140.74px;font-size:11.25px;line-height:11.25px;font-weight:normal;font-style:normal;color:#616161;transform:scaleX(1.0238)">Помощь</div>
<div class="t" style="left:103.84px;top:174.90px;font-size:12.0px;line-height:12.0px;font-weight:normal;font-style:normal;color:#212121;transform:scaleX(0.9633)">Мои сметы</div>
<div class="t" style="left:121.66px;top:209.80px;font-size:12.0px;line-height:12.0px;font-weight:normal;font-style:normal;color:#212121;transform:scaleX(0.9429)">Подготовительные работы</div>
<div class="t" style="left:139.24px;top:244.80px;font-size:12.0px;line-height:12.0px;font-weight:normal;font-style:normal;color:#212121;transform:scaleX(0.9585)">Конъюнктурный анализ</div>
<div class="t" style="left:104.25px;top:282.80px;font-size:12.0px;line-height:12.0px;font-weight:normal;font-style:normal;color:#212121;transform:scaleX(0.9511)">Корзина</div>
<div class="t" style="left:402.93px;top:166.88px;font-size:14.5px;line-height:14.5px;font-weight:normal;font-style:normal;color:#424242;transform:scaleX(0.9716)">Основные</div>
<div class="t" style="left:518.78px;top:166.88px;font-size:14.5px;line-height:14.5px;font-weight:bold;font-style:normal;color:#212121;transform:scaleX(0.9172)">Оформление</div>
<div class="t" style="left:846.58px;top:246.38px;font-size:14.5px;line-height:14.5px;font-weight:bold;font-style:normal;color:#000;transform:scaleX(0.9185)">СВОДНАЯ ТАБЛИЦА РЕЗУЛЬТАТОВ КОНЪЮНКТУРНОГО АНАЛИЗА</div>
<div class="t" style="left:807.07px;top:293.32px;font-size:17.5px;line-height:17.5px;font-weight:normal;font-style:normal;color:#212121;transform:scaleX(0.9339)">Корпус №1 Строительство жилого квартала, Конъюнктурный анализ</div>
<div class="t" style="left:914.96px;top:326.52px;font-size:13.5px;line-height:13.5px;font-weight:normal;font-style:italic;color:#212121;transform:scaleX(0.8445)">(наименование объекта капитального строительства)</div>
<div class="t" style="left:675.80px;top:415.52px;font-size:13.5px;line-height:13.5px;font-weight:bold;font-style:normal;color:#000;transform:scaleX(0.9641)">Составил</div>
<div class="t" style="left:674.82px;top:475.52px;font-size:13.5px;line-height:13.5px;font-weight:bold;font-style:normal;color:#000;transform:scaleX(0.9846)">Проверил</div>
<div class="t" style="left:674.78px;top:535.52px;font-size:13.5px;line-height:13.5px;font-weight:bold;font-style:normal;color:#000;transform:scaleX(1.0218)">Застройщик (технический заказчик)</div>
<div class="t" style="left:1005.10px;top:442.52px;font-size:13.5px;line-height:13.5px;font-weight:normal;font-style:italic;color:#212121;transform:scaleX(0.9011)">(наименование должности)</div>
<div class="t" style="left:1238.03px;top:442.52px;font-size:13.5px;line-height:13.5px;font-weight:normal;font-style:italic;color:#212121;transform:scaleX(0.8680)">(фамилия, имя, отчество (при наличии)</div>
<div class="t" style="left:1005.10px;top:502.52px;font-size:13.5px;line-height:13.5px;font-weight:normal;font-style:italic;color:#212121;transform:scaleX(0.9011)">(наименование должности)</div>
<div class="t" style="left:1238.03px;top:502.52px;font-size:13.5px;line-height:13.5px;font-weight:normal;font-style:italic;color:#212121;transform:scaleX(0.8680)">(фамилия, имя, отчество (при наличии)</div>
<div class="t" style="left:1005.10px;top:562.52px;font-size:13.5px;line-height:13.5px;font-weight:normal;font-style:italic;color:#212121;transform:scaleX(0.9011)">(наименование должности)</div>
<div class="t" style="left:1238.03px;top:562.52px;font-size:13.5px;line-height:13.5px;font-weight:normal;font-style:italic;color:#212121;transform:scaleX(0.8680)">(фамилия, имя, отчество (при наличии)</div>
<div class="t" style="left:1612.95px;top:989.38px;font-size:20.5px;line-height:20.5px;font-weight:normal;font-style:normal;color:#fff;transform:scaleX(1.0514)">Открыть КА</div>
</body></html>
